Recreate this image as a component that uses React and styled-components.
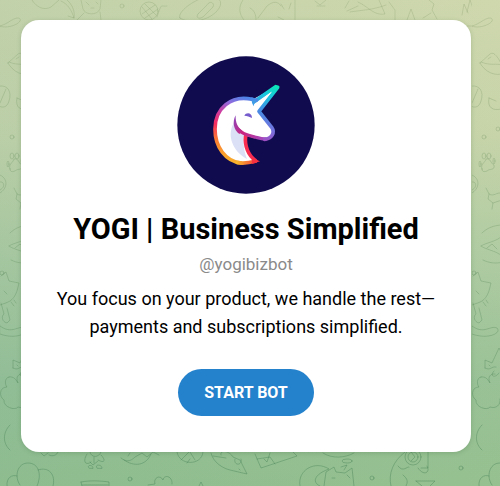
import styled, { createGlobalStyle } from "styled-components";

const App = () => {
  return (
    <>
      <GlobalStyles />
      <Page>
        <Wallpaper />
        <Card>
          <Avatar />
          <Title>YOGI | Business Simplified</Title>
          <Username>@yogibizbot</Username>
          <Description>
            You focus on your product, we handle the rest—payments and subscriptions simplified.
          </Description>
          <StartButton type="button">START BOT</StartButton>
        </Card>
      </Page>
    </>
  );
};

const Avatar = () => (
  <AvatarSvg viewBox="21 18 414 414" role="img" aria-label="Unicorn logo">
    <defs>
      <linearGradient id="mane" gradientUnits="userSpaceOnUse" x1="240" y1="145" x2="180" y2="342">
        <stop offset="0" stopColor="#4c84e6" />
        <stop offset="0.14" stopColor="#8f6bdd" />
        <stop offset="0.32" stopColor="#d13b9d" />
        <stop offset="0.5" stopColor="#f52d60" />
        <stop offset="0.72" stopColor="#fb7b32" />
        <stop offset="1" stopColor="#f8b82a" />
      </linearGradient>
      <linearGradient id="face" gradientUnits="userSpaceOnUse" x1="325" y1="108" x2="270" y2="272">
        <stop offset="0" stopColor="#0ce8b5" />
        <stop offset="0.2" stopColor="#18c9dc" />
        <stop offset="0.45" stopColor="#3d93e6" />
        <stop offset="0.78" stopColor="#7770dc" />
        <stop offset="1" stopColor="#a64ac0" />
      </linearGradient>
      <linearGradient id="jaw" gradientUnits="userSpaceOnUse" x1="195" y1="200" x2="290" y2="270">
        <stop offset="0" stopColor="#8f45b8" />
        <stop offset="0.4" stopColor="#c9247f" />
        <stop offset="1" stopColor="#9c4fc8" />
      </linearGradient>
      <linearGradient id="base" gradientUnits="userSpaceOnUse" x1="200" y1="340" x2="265" y2="334">
        <stop offset="0" stopColor="#f8b82a" />
        <stop offset="1" stopColor="#f5303f" />
      </linearGradient>
    </defs>
    <circle cx="228" cy="225" r="206" fill="#100b4e" />
    <path
      d="M246 149 L318 111 L266 184 L305 233 C315 248 303 267 283 268 C260 265 243 261 225 257 C222 287 235 320 260 333 C190 357 134 306 134 237 C134 174 185 136 246 149 Z"
      fill="#fff"
    />
    <path d="M196 212 C181 230 178 257 187 279 C196 301 209 315 231 327 C222 303 219 283 223 258 C206 246 196 231 196 212 Z" fill="#dce0f6" />
    <g fill="none" strokeWidth="11" strokeLinecap="round" strokeLinejoin="round">
      <path d="M246 148 C184 134 135 175 135 237 C135 290 166 334 213 339" stroke="url(#mane)" />
      <path d="M203 338 C222 341 240 338 256 334" stroke="url(#base)" />
      <path d="M227 257 C223 288 235 317 257 332" stroke="#f72c50" />
      <path d="M204 238 C216 253 236 257 254 261 C266 264 275 268 288 267" stroke="url(#jaw)" strokeWidth="10" />
      <path d="M251 156 L317 110 L323 112 L267 184 L305 232 C316 248 305 266 284 268" stroke="url(#face)" />
      <path d="M246 148 L259 151" stroke="#4c8be7" />
    </g>
    <path d="M197 196 C196 218 203 233 217 242 L208 252 C191 240 186 216 197 196 Z" fill="url(#jaw)" />
    <path d="M245 152 L258 150 L250 169 Z" fill="#3f9de6" />
    <path d="M255 162 L305 125 L262 178 C259 172 256 167 252 165 Z" fill="#fff" />
    <path d="M223 197 C229 186 246 188 246 204 C239 200 231 197 223 197 Z" fill="#765ccc" />
    <path d="M246 324 L270 334 L246 342 Z" fill="#f5303f" />
  </AvatarSvg>
);

// Pet doodles, tiled sideways behind the card
const Wallpaper = () => (
  <WallpaperSvg aria-hidden="true">
    <defs>
      <linearGradient id="ink" gradientUnits="userSpaceOnUse" x1="0" y1="0" x2="0" y2="486">
        <stop offset="0" stopColor="#718c58" stopOpacity="0.22" />
        <stop offset="0.5" stopColor="#5e8b5c" stopOpacity="0.3" />
        <stop offset="1" stopColor="#3f7d53" stopOpacity="0.4" />
      </linearGradient>
      <pattern id="doodles" width="472" height="486" patternUnits="userSpaceOnUse">
        <g fill="none" stroke="url(#ink)" strokeLinecap="round" strokeLinejoin="round">
          {/* top row */}
          <path d="M32 0 C36 7 44 11 51 7 L59 0 M61 1 C68 4 72 11 74 18 M67 0 C73 5 75 12 74 18 L68 16" />
          <path d="M81 0 L83 9 C85 15 97 16 100 9 L101 0 M86 2 L89 5 M96 2 L98 4 M91 8 L94 8 M77 20 L84 13 M100 12 L101 20" />
          <circle cx="122" cy="6" r="2" />
          <circle cx="149" cy="11" r="9" />
          <path d="M142 7 L152 19 M145 4 L156 15 M142 14 L155 5 M145 18 L158 9 M157 17 C162 2 160 7 167 6" />
          <path d="M180 18 C176 13 194 -1 207 -3 C220 -5 225 3 216 12 C207 21 189 24 180 18 Z M198 14 L207 5 C210 0 215 3 213 7 L204 16 C200 20 195 18 198 14" />
          <path d="M243 0 C238 7 239 14 244 20 M250 8 C254 10 256 14 256 20 M258 18 L267 6 C273 1 278 1 281 6 M281 4 L284 9 M291 3 L289 9 M295 0 L295 20 M278 17 L284 20" />
          <path d="M315 1 L320 5 L326 0 M317 6 L325 6 M345 8 L349 1 M347 11 L358 6 M358 2 C369 7 374 16 385 14 L379 0 M350 12 C362 10 373 10 386 5 M389 2 L395 10 L395 20" />
          <path d="M407 20 L411 9 L415 20 M429 0 L434 4 L432 10 L437 19 M423 18 L431 13 M462 15 L464 4 L468 13 M467 12 L470 0 L475 14" />
          <path d="M-5 26 C5 28 12 17 19 18 C24 21 14 27 5 27 L-5 26 M467 26 L472 26" />

          {/* side column */}
          <path d="M8 63 L18 54 C23 50 29 62 33 73 C23 77 13 72 8 63 Z M9 62 C18 66 25 63 30 65 M16 59 L19 57" />
          <path d="M0 86 C8 85 12 92 9 101 C7 108 2 108 -1 106 M0 103 L6 89" />
          <path d="M17 98 C15 108 21 111 29 109 M17 98 L24 101" />
          <circle cx="12" cy="137" r="2" />
          <circle cx="26" cy="129" r="2" />
          <path d="M10 169 C8 164 13 163 14 159 C19 158 18 163 22 165 C23 171 18 168 15 171 C12 172 10 172 10 169 Z" />
          <ellipse cx="8" cy="164" rx="1" ry="3" />
          <ellipse cx="12" cy="156" rx="2" ry="3" />
          <ellipse cx="17" cy="156" rx="2" ry="3" />
          <ellipse cx="22" cy="161" rx="1" ry="3" />
          <path d="M0 175 C9 179 7 189 0 193 M0 190 C6 187 4 181 0 182" />
          <path d="M14 188 L17 194 C22 197 24 192 30 193 M17 194 L16 199 L21 203 L20 209 M21 203 L30 200" />
          <path d="M10 233 C15 228 22 225 31 225 M9 246 C15 242 25 242 31 235 M9 246 C14 250 23 250 30 256 M15 248 L20 244 L25 249 M11 260 C17 263 24 264 31 262" />
          <circle cx="2" cy="273" r="2" />
          <path d="M1 276 L6 272 L9 281 L19 283 L17 291 C13 302 8 302 0 305 M4 291 L7 294 M11 302 L14 306 M14 300 L16 303 M1 303 L4 314 C1 316 2 322 7 323 L10 320 L7 308" />
          <path d="M0 326 C12 335 18 325 25 328 C30 333 16 340 0 334 Z" />
          <path d="M13 368 L13 360 L20 363 L27 348 L30 354 M13 368 C19 371 19 366 24 367 M17 365 L18 366" />
          <path d="M9 377 C4 378 5 385 7 387 C-1 387 -1 397 4 400 C3 407 15 411 18 407 C24 409 29 405 28 399 M9 377 C14 376 16 380 18 383 C15 377 19 373 23 374 M22 371 C17 376 23 379 27 373" />
          <path d="M10 425 C2 433 3 444 10 450" />

          {/* bottom row */}
          <path d="M20 485 C14 477 17 463 28 463 C39 463 42 475 37 486 M38 470 C49 466 56 475 53 486 M7 486 C6 478 12 474 17 476" />
          <path d="M41 453 L44 456 L48 453 M49 455 C53 457 57 455 58 452" />
          <path d="M90 452 C91 458 99 458 101 452 M87 454 C82 462 86 466 91 462 M98 460 C105 464 106 460 101 455 M90 462 L93 465 L98 461 M89 468 C86 465 93 464 93 468 Z M97 468 C94 464 102 464 102 468 Z M94 457 L94 463" />
          <path d="M121 458 C126 462 130 462 135 457 L142 453 L147 457 L153 452 L159 455 M124 460 C134 467 146 466 151 454 M128 456 L130 453" />
          <path d="M177 452 C179 466 202 466 203 452 M181 460 L189 452 M190 452 L195 460 M187 463 L190 459" />
          <path d="M211 453 C213 462 222 468 230 470 L247 474 L240 460 L233 457 C229 450 219 450 221 455 M235 459 C233 466 243 466 241 459 M239 469 L240 470 M213 456 L226 458" />
          <circle cx="130" cy="479" r="2" />
          <path d="M81 482 C91 480 102 481 109 482 L109 486 M81 482 L82 486 M82 485 L108 485" />
          <path d="M148 485 L155 484 C153 478 160 474 163 480 C164 474 173 476 172 484 M199 486 L201 482 L203 486" />
          <path d="M255 454 L261 468 L297 456 L293 452 M257 459 L270 457 L275 464 M264 459 L267 462 L270 453 M323 453 C332 459 345 458 354 453" />
          <ellipse cx="347" cy="461" rx="5" ry="2" />
          <path d="M341 467 L347 465 L344 470 M300 486 C297 470 315 460 329 469 C315 474 311 482 320 486 M324 486 L326 472 L334 467 L336 472 L345 473 L352 468 L354 486 M332 478 L335 478 M347 475 L350 478" />
          <circle cx="372" cy="478" r="2" />
          <circle cx="413" cy="457" r="8" />
          <circle cx="413" cy="457" r="5" />
          <path d="M411 452 L415 457 L411 461 M405 452 C393 461 388 474 391 486 M398 466 C403 473 407 466 409 467 M421 468 L428 468 L428 452 M418 468 C424 477 431 472 427 466 M403 475 C408 479 408 482 406 486 M416 481 L435 481 L430 486 M416 481 L422 486" />
          <circle cx="461" cy="468" r="2" />
        </g>
      </pattern>
    </defs>
    <rect width="100%" height="100%" fill="url(#doodles)" />
  </WallpaperSvg>
);

const GlobalStyles = createGlobalStyle`
  * {
    box-sizing: border-box;
  }

  body {
    margin: 0;
    font-family: Roboto, sans-serif;
    color: #000;
  }
`;

const Page = styled.main`
  position: relative;
  isolation: isolate;
  min-height: 100vh;
  padding: 20px 29px 34px 21px;
  background:
    linear-gradient(90deg, rgba(125, 180, 150, 0.16), rgba(210, 220, 160, 0.08)),
    linear-gradient(180deg, #cfd7ae 0%, #c6d3aa 28%, #adcaa2 52%, #95bf96 78%, #91be8e 100%);
`;

const WallpaperSvg = styled.svg`
  position: absolute;
  inset: 0;
  z-index: -1;
  width: 100%;
  height: 100%;
`;

const Card = styled.section`
  display: flex;
  flex-direction: column;
  align-items: center;
  padding: 36px 32px;
  border-radius: 18px;
  background-color: #fff;
  box-shadow: 0 1px 4px rgba(60, 100, 60, 0.25);
  text-align: center;
`;

const AvatarSvg = styled.svg`
  width: 138px;
  height: 138px;
`;

const Title = styled.h1`
  margin: 16px 0 0;
  font-size: 29px;
  font-weight: 700;
  line-height: 38px;
`;

const Username = styled.div`
  margin-top: 5px;
  font-size: 17px;
  line-height: 22px;
  color: #8a8a8a;
`;

const Description = styled.p`
  margin: 10px 0 0;
  font-size: 18px;
  line-height: 28px;
`;

const StartButton = styled.button`
  margin-top: 28px;
  padding: 0 26px;
  border: 0;
  border-radius: 24px;
  background-color: #2481cc;
  font-family: inherit;
  font-size: 16px;
  font-weight: 700;
  line-height: 47px;
  color: #fff;
  cursor: pointer;
`;

export default App;
